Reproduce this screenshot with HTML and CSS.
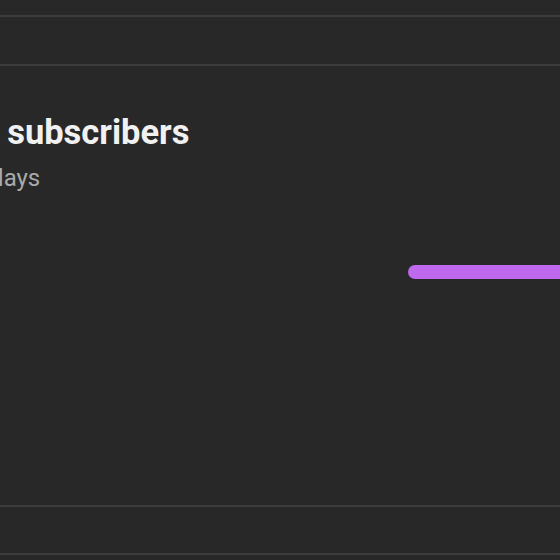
FILE: index.html
```html
<!DOCTYPE html>
<html>
<head>
<meta charset="utf-8">
<link rel="stylesheet" href="styles.css">
</head>
<body>
<div class="page">
  <div class="top"></div>
  <div class="tabs"></div>
  <div class="card">
    <div class="headline">+1 subscribers</div>
    <div class="period">Last 28 days</div>
    <div class="chart">
      <div class="line"></div>
    </div>
  </div>
  <div class="footer"></div>
</div>
</body>
</html>
```
FILE: styles.css
```css
html, body {
  margin: 0;
  padding: 0;
  background: #282828;
  overflow: hidden;
}
.page {
  width: 560px;
  height: 560px;
  overflow: hidden;
  font-family: Roboto, "Liberation Sans", sans-serif;
}
.top {
  height: 15px;
  border-bottom: 2px solid #3c3c3c;
}
.tabs {
  height: 47px;
  border-bottom: 2px solid #3c3c3c;
}
.card {
  box-sizing: border-box;
  height: 441px;
  border-bottom: 2px solid #3c3c3c;
  padding-top: 46px;
  overflow: hidden;
}
.headline {
  font-size: 34.5px;
  font-weight: 700;
  line-height: 40px;
  color: #f1f1f1;
  margin-left: -40px;
  white-space: nowrap;
}
.period {
  font-size: 24px;
  line-height: 28px;
  color: #aaaaaa;
  margin-top: 12px;
  margin-left: -95px;
  white-space: nowrap;
}
.chart {
  padding-top: 73px;
}
.line {
  margin-left: 408px;
  width: 200px;
  height: 14px;
  border-radius: 7px;
  background: #bf69ef;
}
.footer {
  height: 46px;
  border-bottom: 2px solid #3c3c3c;
}
```
